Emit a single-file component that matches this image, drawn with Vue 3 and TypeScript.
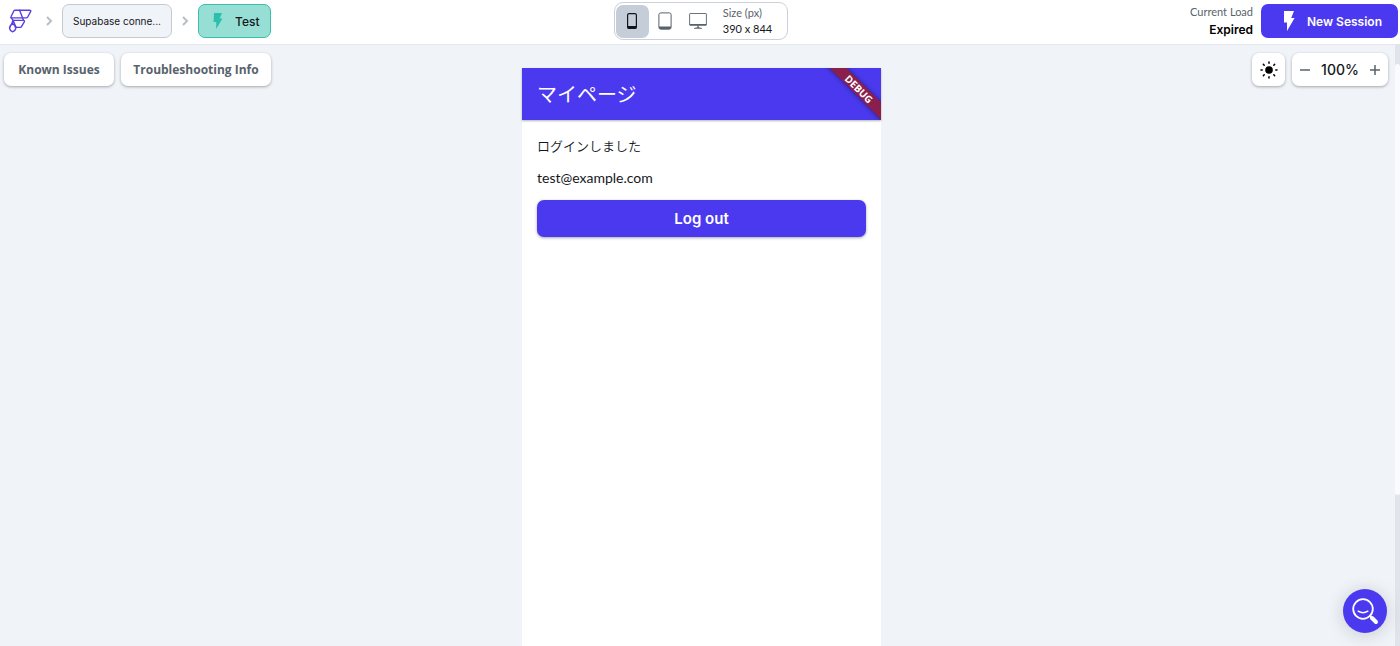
<script setup lang="ts">
import { ref } from 'vue'

type Device = 'phone' | 'tablet' | 'desktop'
const devices: Device[] = ['phone', 'tablet', 'desktop']
const device = ref<Device>('phone')
const zoom = ref(100)
</script>

<template>
  <div class="app">
    <header class="topbar">
      <nav class="crumbs" aria-label="Breadcrumb">
        <a class="logo" href="#" aria-label="Home">
          <svg width="26" height="26" viewBox="0 0 26 26" fill="none" stroke="#5a3fe0" stroke-width="1.4" stroke-linejoin="round" stroke-linecap="round">
            <path d="M7 2.2H21.6C22.8 2.2 23 2.9 22.6 3.7L19.7 9C19.3 9.7 19 9.9 18.2 9.9H3.6C2.8 9.9 2.7 9.2 3.1 8.5L5.8 3C6.1 2.4 6.4 2.2 7 2.2Z" />
            <path d="M11.6 2.2L15.6 12.4M3.4 9.9L5 12.4H15.4C16.5 12.4 16.7 13.1 16.3 13.8L13.6 18.4C13.3 19.1 13 19.4 12.3 19.4H7.4" />
            <path d="M5 12.4L8 19.4M5 12.4L3.6 16.2" />
            <path d="M4.6 15.6C2.6 17 1.3 18.8 1.6 20.5C1.9 22 3.2 23.4 4.6 23.8C6.2 23.4 7.5 22 7.8 20.2C8 18.4 6.4 16.8 4.6 15.6Z" />
          </svg>
        </a>
        <svg class="chevron" width="8" height="12" viewBox="0 0 8 12"><path d="M2 2L6 6L2 10" /></svg>
        <button class="crumb project" type="button">Supabase conne...</button>
        <svg class="chevron" width="8" height="12" viewBox="0 0 8 12"><path d="M2 2L6 6L2 10" /></svg>
        <button class="crumb test" type="button">
          <svg width="10" height="16" viewBox="0 0 10 16"><path fill="#2cbfae" d="M1 0H9L6.7 5.5H9.5L3.2 16V9H.6Z" /></svg>
          Test
        </button>
      </nav>

      <div class="sizer">
        <div class="devices">
          <button
            v-for="d in devices"
            :key="d"
            type="button"
            class="device"
            :class="{ active: device === d }"
            :aria-label="d"
            :aria-pressed="device === d"
            @click="device = d"
          >
            <svg v-if="d === 'phone'" width="12" height="18" viewBox="0 0 12 18">
              <rect x="1.6" y="1.6" width="8.8" height="14.8" rx="1.6" fill="none" stroke="#111519" stroke-width="1.2" />
              <path d="M1.5 14H10.5V15.5Q10.5 17 9 17H3Q1.5 17 1.5 15.5Z" fill="#111519" />
            </svg>
            <svg v-else-if="d === 'tablet'" width="14" height="18" viewBox="0 0 14 18">
              <rect x=".9" y=".9" width="12.2" height="16.2" rx="1.8" fill="none" stroke="#57636c" />
              <path d="M1 14.5H13V15.5Q13 17.2 11.3 17.2H2.7Q1 17.2 1 15.5Z" fill="#57636c" />
            </svg>
            <svg v-else width="18" height="18" viewBox="0 0 18 18">
              <rect x=".6" y="1.5" width="16.8" height="11.6" rx=".6" fill="none" stroke="#57636c" stroke-width=".9" />
              <path d="M.6 12H17.4V13.5H.6ZM8.4 13H9.6V15.3L13 16V16.8H5V16L8.4 15.3Z" fill="#57636c" />
            </svg>
          </button>
        </div>
        <div class="size">
          <span class="muted">Size (px)</span>
          <span>390 x 844</span>
        </div>
      </div>

      <div class="session">
        <div class="load">
          <span class="muted">Current Load</span>
          <strong>Expired</strong>
        </div>
        <button class="new-session" type="button">
          <svg width="12" height="20" viewBox="0 0 12 20"><path fill="#fff" d="M1 0H11L8.2 7H11.6L4 20V11.4H1Z" /></svg>
          New Session
        </button>
      </div>
    </header>

    <main class="stage">
      <div class="tools">
        <button class="card issues" type="button">Known Issues</button>
        <button class="card info" type="button">Troubleshooting Info</button>
      </div>

      <section class="phone">
        <div class="appbar">
          <h1>マイページ</h1>
          <div class="ribbon-clip"><span class="ribbon">DEBUG</span></div>
        </div>
        <div class="body">
          <p class="message">ログインしました</p>
          <p class="email">test@example.com</p>
          <button class="logout" type="button">Log out</button>
        </div>
      </section>

      <div class="tools right">
        <button class="card theme" type="button" aria-label="Toggle brightness">
          <svg width="18" height="18" viewBox="0 0 18 18" stroke="#000" stroke-width="1.5" stroke-linecap="round">
            <circle cx="9" cy="9" r="3.8" stroke="none" />
            <path d="M9 1V2.2M9 15.8V17M1 9H2.2M15.8 9H17M3.4 3.4L4.2 4.2M13.8 13.8L14.6 14.6M3.4 14.6L4.2 13.8M13.8 4.2L14.6 3.4" />
          </svg>
        </button>
        <div class="card zoom">
          <button type="button" aria-label="Zoom out" @click="zoom -= 10">
            <svg width="12" height="12" viewBox="0 0 12 12"><path d="M1 6H11" /></svg>
          </button>
          <span>{{ zoom }}%</span>
          <button type="button" aria-label="Zoom in" @click="zoom += 10">
            <svg width="12" height="12" viewBox="0 0 12 12"><path d="M1 6H11M6 1V11" /></svg>
          </button>
        </div>
      </div>
      <div class="scroll-track"><div class="scroll-thumb"></div></div>
    </main>

    <button class="help" type="button" aria-label="Search help">
      <svg width="28" height="28" viewBox="0 0 28 28" fill="none" stroke="#fff" stroke-linecap="round">
        <circle cx="12" cy="12" r="9.8" stroke-width="1.8" />
        <path d="M7.2 14.2Q12 17.4 16.8 14.2" stroke-width="1.5" />
        <path d="M19 19L20.8 20.8" stroke-width="2" />
        <path d="M21 21L25 25" stroke-width="4" />
      </svg>
    </button>
  </div>
</template>

<style>
body {
  margin: 0;
}
</style>

<style scoped>
.app {
  display: flex;
  flex-direction: column;
  min-height: 100vh;
  background: #f0f3f8;
  color: #14181b;
  font-family: Inter, "Noto Sans CJK JP", sans-serif;
}
button {
  border: 0;
  padding: 0;
  margin: 0;
  background: none;
  font: inherit;
  color: inherit;
  cursor: pointer;
}
svg {
  display: block;
  flex: none;
}
.topbar {
  display: grid;
  grid-template-columns: 1fr auto 1fr;
  align-items: center;
  height: 44px;
  padding: 0 2px 2px 4px;
  box-sizing: border-box;
  background: #fff;
  box-shadow: 0 1px 0 #e3e7ed;
}
.crumbs {
  display: flex;
  align-items: center;
}
.logo {
  margin: 0 2px 0 4px;
}
.chevron {
  margin: 0 9px;
  fill: none;
  stroke: #b9bfc6;
  stroke-width: 2;
}
.crumb {
  height: 34px;
  box-sizing: border-box;
  border-radius: 7px;
}
.project {
  width: 110px;
  border: 1px solid #c3cad2;
  background: #f0f3f8;
  font-size: 10px;
}
.test {
  display: flex;
  align-items: center;
  gap: 12px;
  width: 73px;
  padding-left: 14px;
  border: 1px solid #39bfae;
  background: #97dfd4;
  font-size: 12px;
  font-weight: 500;
}
.sizer {
  display: flex;
  align-items: center;
  gap: 8px;
  height: 38px;
  padding: 0 15px 0 1px;
  box-sizing: border-box;
  border: 1px solid #cbd1d8;
  border-radius: 9px;
}
.devices {
  display: flex;
}
.device {
  display: grid;
  place-items: center;
  width: 33px;
  height: 33px;
  border-radius: 7px;
}
.device.active {
  background: #c5ced8;
}
.size,
.load {
  display: flex;
  flex-direction: column;
  font-family: Lato, sans-serif;
  font-size: 11px;
  line-height: 16px;
}
.muted {
  color: #57636c;
}
.session {
  display: flex;
  align-items: center;
  justify-content: flex-end;
  gap: 8px;
}
.load {
  align-items: flex-end;
  line-height: 18px;
}
.load strong {
  font-family: Inter, sans-serif;
  font-size: 12px;
  font-weight: 600;
  color: #000;
}
.new-session {
  display: flex;
  align-items: center;
  justify-content: center;
  gap: 12px;
  width: 137px;
  height: 34px;
  padding-left: 6px;
  border-radius: 7px;
  background: #4b39ef;
  color: #fff;
  font-size: 12px;
  font-weight: 600;
}
.stage {
  position: relative;
  display: grid;
  grid-template-columns: 1fr 359px 1fr;
  flex: 1;
  margin-top: 1px;
  padding-left: 3px;
}
.tools {
  display: flex;
  align-items: flex-start;
  gap: 7px;
  padding: 8px 12px 0 1px;
}
.right {
  justify-content: flex-end;
}
.card {
  height: 33px;
  border-radius: 7px;
  background: #fff;
  box-shadow: 0 1px 3px rgba(20, 24, 27, 0.35);
  color: #57636c;
  font-family: "Open Sans", sans-serif;
  font-size: 12px;
  font-weight: 700;
}
.issues {
  width: 110px;
}
.info {
  width: 150px;
}
.theme {
  display: grid;
  place-items: center;
  width: 33px;
}
.zoom {
  display: flex;
  align-items: center;
  justify-content: space-between;
  width: 96px;
  padding: 0 7px;
  box-sizing: border-box;
  color: #14181b;
  font-family: Inter, sans-serif;
  font-size: 14px;
  font-weight: 500;
}
.zoom path {
  stroke: #57636c;
  stroke-width: 1.5;
}
.phone {
  margin-top: 23px;
  background: #fff;
}
.appbar {
  position: relative;
  display: flex;
  align-items: center;
  height: 52px;
  padding: 0 15px;
  background: #4b39ef;
  box-shadow: 0 1px 2px rgba(0, 0, 0, 0.3);
}
h1 {
  margin: 0;
  color: #fff;
  font-family: "Noto Sans CJK JP", sans-serif;
  font-size: 20px;
  font-weight: 400;
  line-height: 28px;
}
.ribbon-clip {
  position: absolute;
  inset: 0 0 0 auto;
  width: 60px;
  overflow: hidden;
}
.ribbon {
  position: absolute;
  top: 15px;
  right: -28px;
  width: 100px;
  background: #8a1e4c;
  box-shadow: 0 0 5px rgba(0, 0, 0, 0.5);
  color: #fff;
  font-family: "Open Sans", sans-serif;
  font-size: 10px;
  font-weight: 700;
  line-height: 12px;
  text-align: center;
  transform: rotate(45deg);
}
.body {
  padding: 16px 15px;
}
.body p {
  margin: 0 0 12px;
  line-height: 20px;
}
.message {
  font-family: "Noto Sans CJK JP", sans-serif;
  font-size: 13px;
  font-weight: 350;
}
.email {
  font-family: Lato, sans-serif;
  font-size: 14px;
}
.logout {
  display: block;
  width: 100%;
  height: 37px;
  border-radius: 7px;
  background: #4b39ef;
  box-shadow: 0 1px 3px rgba(0, 0, 0, 0.35);
  color: #fff;
  font-size: 15px;
  font-weight: 600;
}
.scroll-track {
  position: absolute;
  inset: 0 0 0 auto;
  width: 5px;
  padding-top: 19px;
  background: #e0e4ed;
}
.scroll-thumb {
  height: 431px;
  border-radius: 3px;
  background: #fafbfe;
}
.help {
  position: fixed;
  right: 13px;
  bottom: 13px;
  display: grid;
  place-items: center;
  width: 44px;
  height: 44px;
  border-radius: 50%;
  background: #4b39ef;
  box-shadow: 0 2px 18px rgba(20, 24, 27, 0.18);
}
</style>
